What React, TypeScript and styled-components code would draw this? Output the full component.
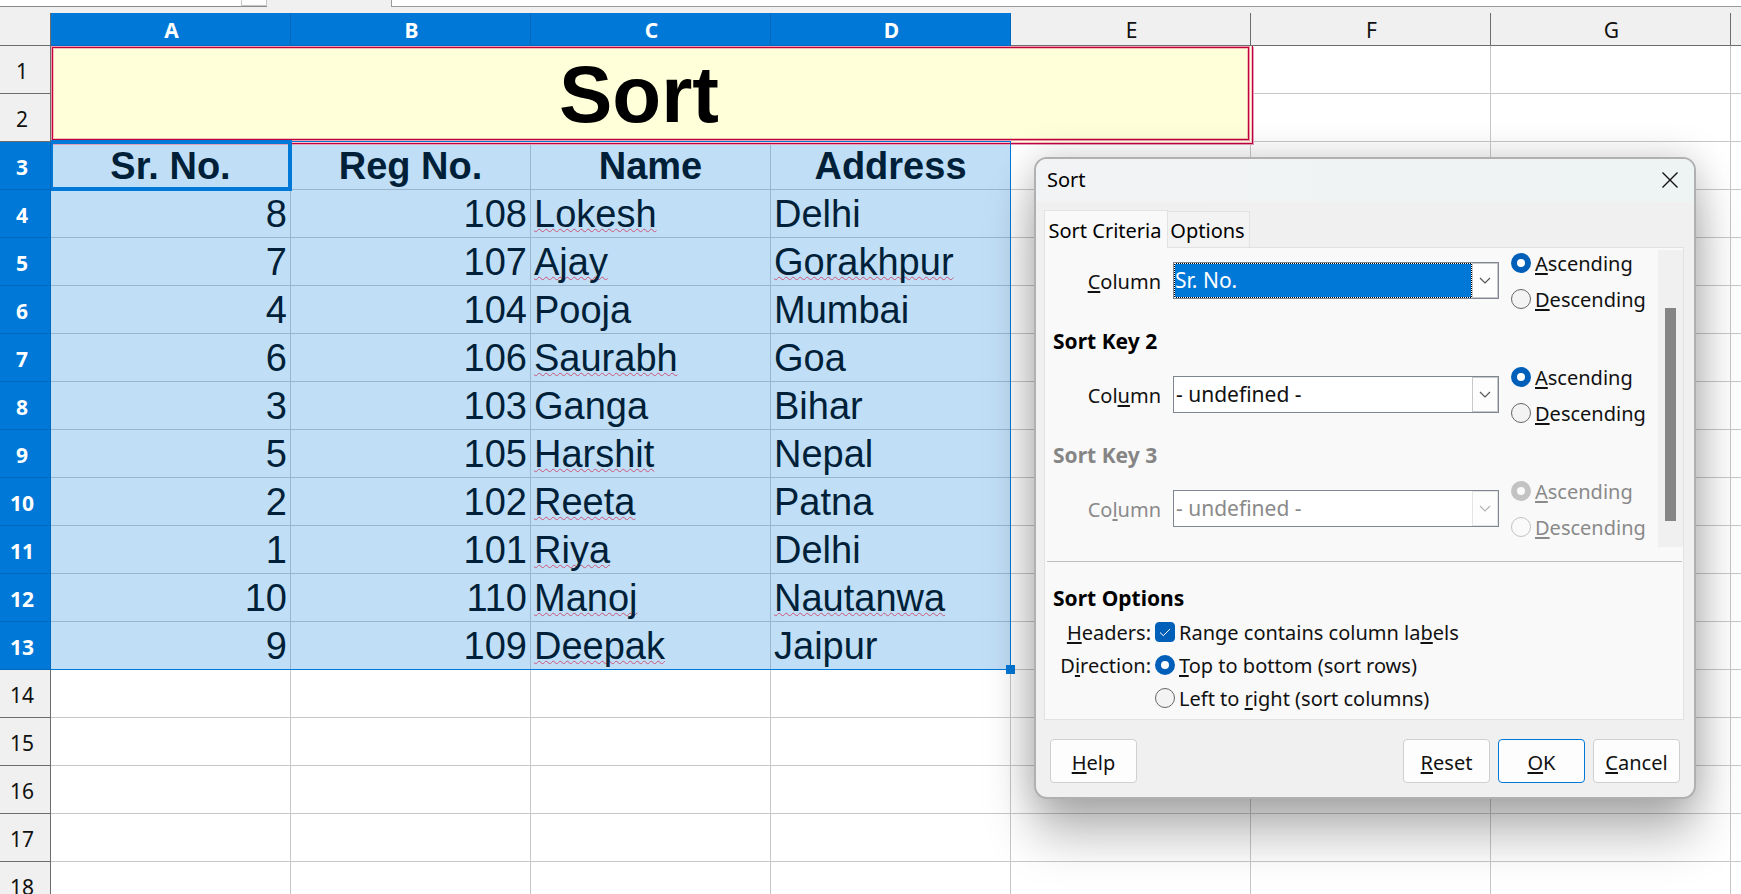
import React, { useState } from "react";
import styled, { createGlobalStyle, css } from "styled-components";

const accent = "#0078d7";
const crimson = "#c2003f";

const GlobalStyle = createGlobalStyle`
  * { box-sizing: border-box; }
  html, body { margin: 0; padding: 0; }
  body { background: #fff; overflow: hidden; }
`;

const Desktop = styled.main`
  position: relative;
  height: 100vh;
  overflow: hidden;
  background: #fff;
  font-family: "Noto Sans", "Open Sans", sans-serif;
  font-size: 20px;
  color: #000;
`;

/* ---------- formula bar edge ---------- */

const FormulaStrip = styled.div`
  display: flex;
  height: 13px;
  padding-bottom: 6px;
  background: #f0f0f0;
`;

const NameBox = styled.div`
  display: flex;
  justify-content: flex-end;
  width: 267px;
  margin-right: 124px;
  background: #fff;
  border-bottom: 1px solid #8a8a8a;
`;

const NameBoxArrow = styled.div`
  width: 26px;
  background: #fdfdfd;
  border: solid #c6c6c6;
  border-width: 0 1px 1px 1px;
`;

const FormulaInput = styled.div`
  flex: 1;
  background: #fff;
  border: solid #9b9b9b;
  border-width: 0 0 1px 1px;
`;

/* ---------- sheet ---------- */

const Sheet = styled.table`
  width: 100%;
  table-layout: fixed;
  border-collapse: separate;
  border-spacing: 0;
`;

const RowHeadCol = styled.col`
  width: 51px;
`;

const DataCol = styled.col`
  width: 240px;
`;

const heading = css<{ $on?: boolean }>`
  border: solid ${(p) => (p.$on ? "#0069bd" : "#6d6d6d")};
  border-width: 0 1px 1px 0;
  background: ${(p) => (p.$on ? accent : "#f0f0f0")};
  color: ${(p) => (p.$on ? "#fff" : "#111")};
  font-weight: ${(p) => (p.$on ? 700 : 400)};
  font-size: 21px;
  line-height: 28px;
  text-align: center;
`;

const ColumnHead = styled.th<{ $on?: boolean }>`
  ${heading}
  height: 33px;
  padding: 2px 0 0 2px;

  &:last-child {
    border-right-width: 0;
  }
`;

const RowHead = styled.th<{ $on?: boolean }>`
  ${heading}
  height: 48px;
  padding: 2px 6px 0 0;
`;

const Cell = styled.td<{ $selected?: boolean; $align?: string }>`
  position: relative;
  height: 48px;
  padding: 0 3px;
  border: solid ${(p) => (p.$selected ? "#9ab6cf" : "#c8c8c8")};
  border-width: 0 1px 1px 0;
  background: ${(p) => (p.$selected ? "#c0def6" : "#fff")};
  color: #001f38;
  font-family: "Liberation Sans", Arial, sans-serif;
  font-size: 38px;
  line-height: 42px;
  text-align: ${(p) => p.$align ?? "left"};
  white-space: nowrap;

  &:last-child {
    border-right-width: 0;
  }
`;

const FieldCell = styled(Cell)`
  font-weight: 700;
`;

const TitleCell = styled.td`
  position: relative;
  height: 96px;
  padding: 2px 24px 0 0;
  background: #ffffd9;
  color: #000;
  font-family: "Liberation Sans", Arial, sans-serif;
  font-size: 80px;
  font-weight: 700;
  line-height: 84px;
  text-align: center;
`;

const TitleInnerFrame = styled.span`
  position: absolute;
  inset: 1px 2px 2px 1px;
  border: 1px solid ${crimson};
  box-shadow: 0 0 0 1px #ee9aa8, inset 0 0 0 1px #f2c0b4;
  pointer-events: none;
`;

const TitleOuterFrame = styled.span`
  position: absolute;
  z-index: 1;
  inset: 0 -2px -2px 0;
  border: solid ${crimson};
  border-width: 0 1px 1px 0;
  box-shadow: 1px 1px 0 #e3a0b8, inset -1px -1px 0 #f4c3cb;
  pointer-events: none;
`;

const Misspelt = styled.span`
  text-decoration: underline wavy 1px #cc5577;
  text-decoration-skip-ink: none;
  text-underline-offset: 1px;
`;

const ActiveFrame = styled.span`
  position: absolute;
  z-index: 3;
  inset: -2px -2px -2px 0;
  border: 4px solid ${accent};
  border-left-width: 2px;
  pointer-events: none;
`;

/* Spans the whole selected range from its first cell: 4 columns by 11 rows. */
const SelectionFrame = styled.span`
  position: absolute;
  z-index: 2;
  top: -1px;
  left: 0;
  width: calc(400% + 4px);
  height: calc(1100% + 12px);
  border: 1px solid ${accent};
  border-left: 0;
  pointer-events: none;

  &::after {
    content: "";
    position: absolute;
    right: -5px;
    bottom: -5px;
    width: 9px;
    height: 9px;
    background: ${accent};
  }
`;

/* ---------- dialog ---------- */

const Dialog = styled.section`
  position: absolute;
  z-index: 10;
  top: 157px;
  left: 1034px;
  width: 662px;
  border: 2px solid #b0b0b0;
  border-radius: 13px;
  background: #f0f0f0;
  box-shadow: 0 36px 50px rgba(0, 0, 0, 0.28), 0 0 36px rgba(0, 0, 0, 0.18);
  line-height: 28px;
`;

const TitleBar = styled.header`
  display: flex;
  align-items: center;
  justify-content: space-between;
  height: 43px;
  padding: 0 16px 2px 11px;
  border-radius: 11px 11px 0 0;
  background: linear-gradient(90deg, #f2f3f4, #eef3f4);
`;

const DialogTitle = styled.h1`
  margin: 0;
  font-size: 20px;
  font-weight: 400;
`;

const CloseButton = styled.button`
  display: flex;
  padding: 0;
  border: 0;
  background: none;
`;

const Tabs = styled.div`
  display: flex;
  align-items: flex-end;
  padding: 8px 8px 0;
`;

const Tab = styled.button<{ $active?: boolean }>`
  position: relative;
  height: ${(p) => (p.$active ? 38 : 36)}px;
  width: ${(p) => (p.$active ? 124 : 82)}px;
  margin-bottom: ${(p) => (p.$active ? -1 : 0)}px;
  padding: 2px 2px 0 0;
  border: 1px solid #e2e2e2;
  border-bottom: 0;
  border-left-width: ${(p) => (p.$active ? 1 : 0)}px;
  background: ${(p) => (p.$active ? "#f9f9f9" : "#f3f3f3")};
  color: inherit;
  font: inherit;
  white-space: nowrap;
`;

const Panel = styled.div`
  margin: 0 10px 0 8px;
  padding-bottom: 5px;
  border: 1px solid #e2e2e2;
  background: #f9f9f9;
`;

const ScrollArea = styled.div`
  display: flex;
  height: 299px;
`;

const KeyList = styled.div`
  flex: 1;
  padding: 1px 8px 0;
`;

const GroupTitle = styled.h2<{ $off?: boolean }>`
  height: 50px;
  margin: 0;
  padding-top: 8px;
  color: ${(p) => (p.$off ? "#858585" : "#000")};
  font-size: 21px;
  line-height: 40px;
`;

const OptionsTitle = styled(GroupTitle)`
  height: 45px;
`;

const KeyRow = styled.div<{ $off?: boolean }>`
  display: grid;
  grid-template-columns: 108px 326px 1fr;
  column-gap: 12px;
  align-items: center;
  height: 64px;
  color: ${(p) => (p.$off ? "#8a8a8a" : "#111")};
`;

const KeyLabel = styled.label`
  padding-top: 2px;
  text-align: right;
`;

const Mnemonic = styled.u`
  text-decoration-thickness: 2px;
  text-underline-offset: 2px;
  text-decoration-skip-ink: none;
`;

const SelectBox = styled.div`
  display: flex;
  height: 37px;
  margin-bottom: 2px;
  border: 1px solid #7f8591;
  background: #fff;
`;

const Select = styled.select<{ $focused?: boolean }>`
  appearance: none;
  flex: 1;
  padding: 0 0 0 1px;
  border: 1px solid transparent;
  border-radius: 0;
  outline: 0;
  background: #fff;
  color: inherit;
  opacity: 1;
  font: inherit;
  font-size: 21px;
  ${(p) =>
    p.$focused &&
    css`
      padding: 0;
      border: 1px dotted #fff;
      background: linear-gradient(${accent}, ${accent}) padding-box,
        linear-gradient(#000, #000) border-box;
      color: #fff;
    `}
`;

const SelectArrow = styled.span<{ $off?: boolean }>`
  display: flex;
  align-items: center;
  justify-content: center;
  width: 26px;
  border: 1px solid ${(p) => (p.$off ? "#e4e4e4" : "#c8c8c8")};
  background: #fdfdfd;
  color: ${(p) => (p.$off ? "#b5b5b5" : "#555")};
`;

const RadioList = styled.div`
  display: flex;
  flex-direction: column;
  gap: 8px;
`;

const Choice = styled.label`
  display: flex;
  align-items: center;
  gap: 4px;
  height: 28px;
  white-space: nowrap;
`;

const ChoiceText = styled.span`
  padding-top: 2px;
`;

const Radio = styled.input.attrs({ type: "radio" })`
  appearance: none;
  flex: none;
  width: 20px;
  height: 20px;
  margin: 0;
  border: 1px solid #666;
  border-radius: 50%;
  background: #f3f3f3;

  &:checked {
    border: 6px solid #005fb8;
    background: #fff;
  }
  &:disabled {
    border-color: #c3c3c3;
    background: #fafafa;
  }
`;

const CheckWrap = styled.span`
  display: grid;

  > * {
    grid-area: 1 / 1;
  }
  > svg {
    pointer-events: none;
  }
`;

const Checkbox = styled.input.attrs({ type: "checkbox" })`
  appearance: none;
  width: 20px;
  height: 20px;
  margin: 0;
  border: 1px solid #666;
  border-radius: 4px;
  background: #f3f3f3;

  &:checked {
    border-color: #005fb8;
    background: #005fb8;
  }
`;

const ScrollTrack = styled.div`
  width: 25px;
  margin-top: 2px;
  padding: 58px 7px 26px;
  background: #f0f0f0;
`;

const ScrollThumb = styled.div`
  height: 100%;
  background: #858585;
`;

const Divider = styled.hr`
  height: 1px;
  margin: 14px 1px 0 2px;
  border: 0;
  background: #bfbfbf;
`;

const Options = styled.div`
  padding: 8px 8px 0;
`;

const OptionRow = styled.div`
  display: grid;
  grid-template-columns: 98px 1fr;
  column-gap: 4px;
  align-items: center;
  height: 33px;
  color: #111;
`;

const OptionName = styled.span`
  padding-top: 2px;
  text-align: right;
`;

const Footer = styled.footer`
  display: flex;
  gap: 8px;
  padding: 19px 14px 14px;
`;

const Spacer = styled.span`
  flex: 1;
`;

const PushButton = styled.button<{ $primary?: boolean }>`
  width: 87px;
  height: 44px;
  padding: 3px 0 0;
  border: 1px solid ${(p) => (p.$primary ? accent : "#cfcfcf")};
  border-radius: 4px;
  background: #fdfdfd;
  color: #111;
  font: inherit;
  line-height: 28px;
`;

/* ---------- data ---------- */

const columns = ["A", "B", "C", "D", "E", "F", "G"];
const fields = ["Sr. No.", "Reg No.", "Name", "Address"];
const records: [number, number, string, string][] = [
  [8, 108, "Lokesh", "Delhi"],
  [7, 107, "Ajay", "Gorakhpur"],
  [4, 104, "Pooja", "Mumbai"],
  [6, 106, "Saurabh", "Goa"],
  [3, 103, "Ganga", "Bihar"],
  [5, 105, "Harshit", "Nepal"],
  [2, 102, "Reeta", "Patna"],
  [1, 101, "Riya", "Delhi"],
  [10, 110, "Manoj", "Nautanwa"],
  [9, 109, "Deepak", "Jaipur"],
];
const misspelt = new Set([
  "Lokesh", "Ajay", "Gorakhpur", "Saurabh", "Harshit", "Reeta", "Riya", "Manoj", "Nautanwa", "Deepak",
]);

/* Text whose letter after the ampersand is the keyboard mnemonic. */
function Text({ children }: { children: string }) {
  const at = children.indexOf("&");
  if (at < 0) return <span>{children}</span>;
  return (
    <span>
      {children.slice(0, at)}
      <Mnemonic>{children[at + 1]}</Mnemonic>
      {children.slice(at + 2)}
    </span>
  );
}

function EmptyCells({ count }: { count: number }) {
  return (
    <>
      {Array.from({ length: count }, (_, i) => (
        <Cell key={i} />
      ))}
    </>
  );
}

function Word({ children }: { children: string }) {
  return misspelt.has(children) ? <Misspelt>{children}</Misspelt> : <>{children}</>;
}

function Spreadsheet() {
  return (
    <Sheet>
      <colgroup>
        <RowHeadCol />
        {columns.map((c) => (
          <DataCol key={c} />
        ))}
        <col />
      </colgroup>
      <thead>
        <tr>
          <ColumnHead />
          {columns.map((c, i) => (
            <ColumnHead key={c} scope="col" $on={i < 4}>
              {c}
            </ColumnHead>
          ))}
          <ColumnHead />
        </tr>
      </thead>
      <tbody>
        <tr>
          <RowHead scope="row">1</RowHead>
          <TitleCell colSpan={5} rowSpan={2}>
            Sort
            <TitleInnerFrame />
            <TitleOuterFrame />
          </TitleCell>
          <EmptyCells count={3} />
        </tr>
        <tr>
          <RowHead scope="row">2</RowHead>
          <EmptyCells count={3} />
        </tr>
        <tr>
          <RowHead scope="row" $on>
            3
          </RowHead>
          {fields.map((f, i) => (
            <FieldCell key={f} $selected $align="center">
              {f}
              {i === 0 && (
                <>
                  <SelectionFrame />
                  <ActiveFrame />
                </>
              )}
            </FieldCell>
          ))}
          <EmptyCells count={4} />
        </tr>
        {records.map(([sr, reg, name, address], i) => (
          <tr key={sr}>
            <RowHead scope="row" $on>
              {i + 4}
            </RowHead>
            <Cell $selected $align="right">{sr}</Cell>
            <Cell $selected $align="right">{reg}</Cell>
            <Cell $selected><Word>{name}</Word></Cell>
            <Cell $selected><Word>{address}</Word></Cell>
            <EmptyCells count={4} />
          </tr>
        ))}
        {[14, 15, 16, 17, 18].map((n) => (
          <tr key={n}>
            <RowHead scope="row">{n}</RowHead>
            <EmptyCells count={8} />
          </tr>
        ))}
      </tbody>
    </Sheet>
  );
}

type SortKeyProps = { id: string; label: string; value: string; focused?: boolean; disabled?: boolean };

function SortKey({ id, label, value, focused, disabled }: SortKeyProps) {
  const [ascending, setAscending] = useState(true);
  return (
    <KeyRow $off={disabled}>
      <KeyLabel htmlFor={id}>
        <Text>{label}</Text>
      </KeyLabel>
      <SelectBox>
        <Select id={id} defaultValue={value} disabled={disabled} $focused={focused}>
          <option>{value}</option>
        </Select>
        <SelectArrow $off={disabled}>
          <svg width="12" height="7" viewBox="0 0 12 7" fill="none" stroke="currentColor" strokeWidth="1.2">
            <path d="M1 1l5 5 5-5" />
          </svg>
        </SelectArrow>
      </SelectBox>
      <RadioList>
        <Choice>
          <Radio name={`${id}-order`} checked={ascending} disabled={disabled} onChange={() => setAscending(true)} />
          <ChoiceText><Text>&Ascending</Text></ChoiceText>
        </Choice>
        <Choice>
          <Radio name={`${id}-order`} checked={!ascending} disabled={disabled} onChange={() => setAscending(false)} />
          <ChoiceText><Text>&Descending</Text></ChoiceText>
        </Choice>
      </RadioList>
    </KeyRow>
  );
}

function SortDialog() {
  return (
    <Dialog role="dialog" aria-labelledby="dialog-title">
      <TitleBar>
        <DialogTitle id="dialog-title">Sort</DialogTitle>
        <CloseButton type="button" aria-label="Close">
          <svg width="16" height="16" viewBox="0 0 16 16" stroke="#111" strokeWidth="1.4">
            <path d="M.5 .5l15 15M15.5 .5l-15 15" />
          </svg>
        </CloseButton>
      </TitleBar>
      <Tabs role="tablist">
        <Tab type="button" role="tab" aria-selected $active>
          Sort Criteria
        </Tab>
        <Tab type="button" role="tab" aria-selected={false}>
          Options
        </Tab>
      </Tabs>
      <Panel role="tabpanel">
        <ScrollArea>
          <KeyList>
            <SortKey id="key1" label="&Column" value="Sr. No." focused />
            <GroupTitle>Sort Key 2</GroupTitle>
            <SortKey id="key2" label="Col&umn" value="- undefined -" />
            <GroupTitle $off>Sort Key 3</GroupTitle>
            <SortKey id="key3" label="Co&lumn" value="- undefined -" disabled />
          </KeyList>
          <ScrollTrack>
            <ScrollThumb />
          </ScrollTrack>
        </ScrollArea>
        <Divider />
        <Options>
          <OptionsTitle>Sort Options</OptionsTitle>
          <OptionRow>
            <OptionName>
              <Text>&Headers:</Text>
            </OptionName>
            <Choice>
              <CheckWrap>
                <Checkbox defaultChecked />
                <svg width="20" height="20" viewBox="0 0 20 20" fill="none" stroke="#fff" strokeWidth="1">
                  <path d="M5 10.5l3.3 3.2L15 7" />
                </svg>
              </CheckWrap>
              <ChoiceText><Text>Range contains column la&bels</Text></ChoiceText>
            </Choice>
          </OptionRow>
          <OptionRow>
            <OptionName>
              <Text>D&irection:</Text>
            </OptionName>
            <Choice>
              <Radio name="direction" defaultChecked />
              <ChoiceText><Text>&Top to bottom (sort rows)</Text></ChoiceText>
            </Choice>
          </OptionRow>
          <OptionRow>
            <OptionName />
            <Choice>
              <Radio name="direction" />
              <ChoiceText><Text>Left to &right (sort columns)</Text></ChoiceText>
            </Choice>
          </OptionRow>
        </Options>
      </Panel>
      <Footer>
        <PushButton type="button"><Text>&Help</Text></PushButton>
        <Spacer />
        <PushButton type="button"><Text>&Reset</Text></PushButton>
        <PushButton type="button" $primary><Text>&OK</Text></PushButton>
        <PushButton type="button"><Text>&Cancel</Text></PushButton>
      </Footer>
    </Dialog>
  );
}

export default function App() {
  return (
    <Desktop>
      <GlobalStyle />
      <FormulaStrip>
        <NameBox>
          <NameBoxArrow />
        </NameBox>
        <FormulaInput />
      </FormulaStrip>
      <Spreadsheet />
      <SortDialog />
    </Desktop>
  );
}
